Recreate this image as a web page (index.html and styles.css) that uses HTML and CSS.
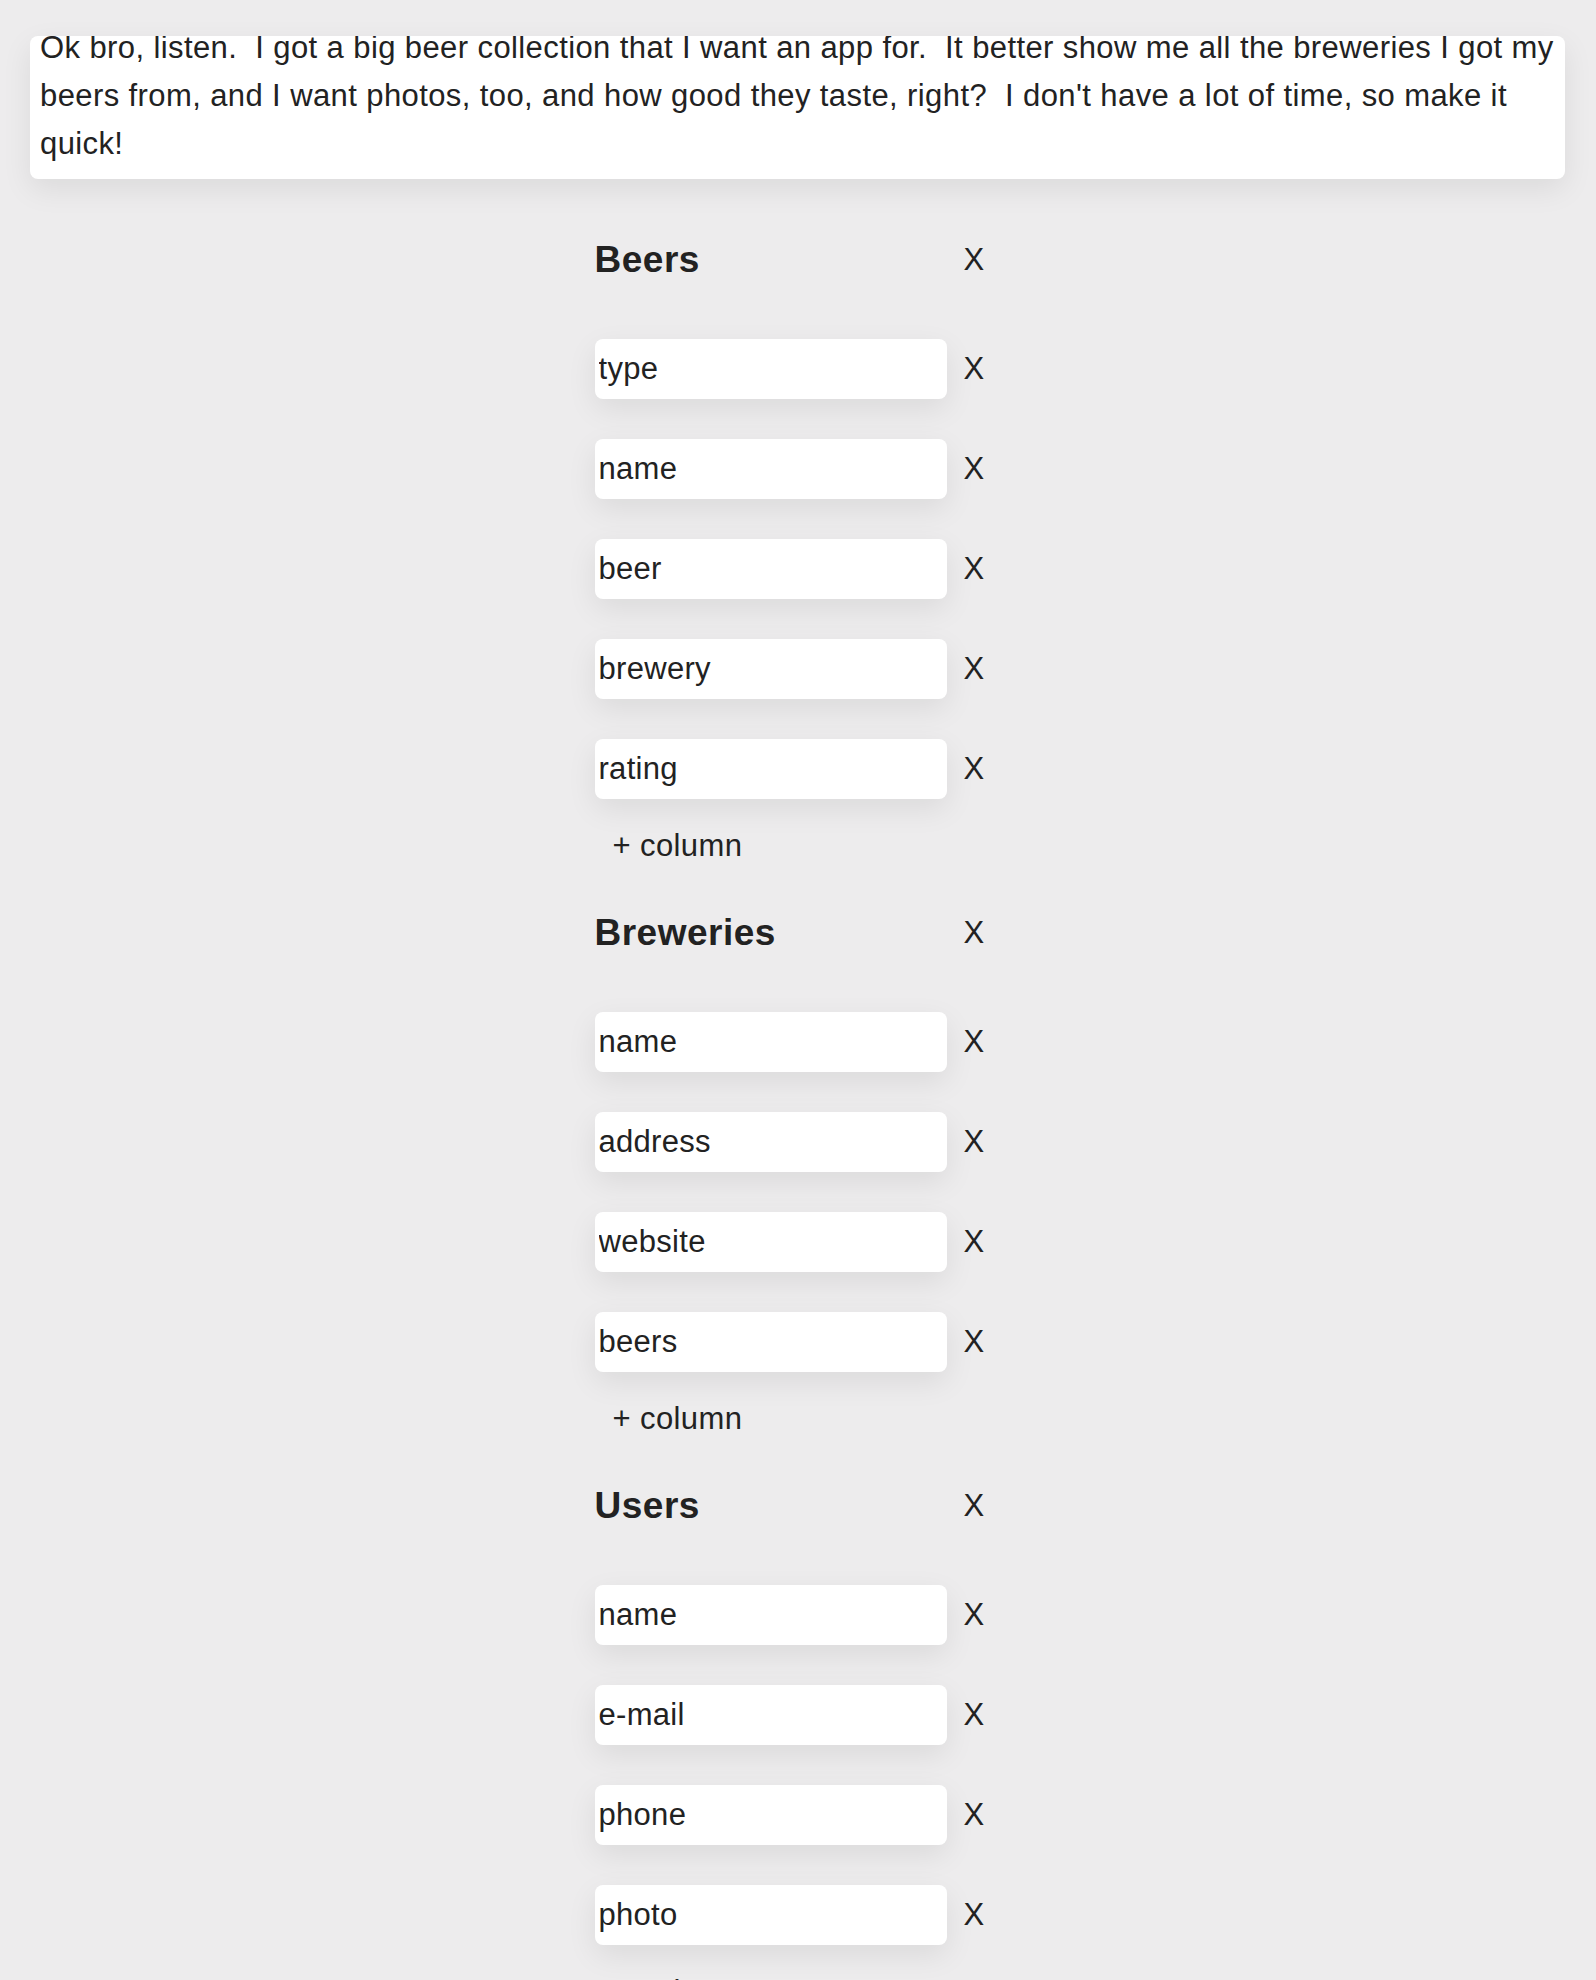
FILE: index.html
```html
<!DOCTYPE html>
<html lang="en">
<head>
    <meta charset="UTF-8">
    <meta name="viewport" content="width=device-width, initial-scale=1.0">
    <title>Beer App Schema</title>
    <link rel="stylesheet" href="styles.css">
</head>
<body>
    <div class="prompt">
        <p class="prompt-text">Ok bro, listen.  I got a big beer collection that I want an app for.  It better show me all the breweries I got my
beers from, and I want photos, too, and how good they taste, right?  I don't have a lot of time, so make it
quick!</p>
    </div>

    <div class="schema">
        <!-- Beers -->
        <div class="table">
            <div class="table-head">
                <h2>Beers</h2>
                <span class="remove">X</span>
            </div>
            <div class="column"><input type="text" value="type"><span class="remove">X</span></div>
            <div class="column"><input type="text" value="name"><span class="remove">X</span></div>
            <div class="column"><input type="text" value="beer"><span class="remove">X</span></div>
            <div class="column"><input type="text" value="brewery"><span class="remove">X</span></div>
            <div class="column"><input type="text" value="rating"><span class="remove">X</span></div>
            <div class="add-column">+ column</div>
        </div>

        <!-- Breweries -->
        <div class="table">
            <div class="table-head">
                <h2>Breweries</h2>
                <span class="remove">X</span>
            </div>
            <div class="column"><input type="text" value="name"><span class="remove">X</span></div>
            <div class="column"><input type="text" value="address"><span class="remove">X</span></div>
            <div class="column"><input type="text" value="website"><span class="remove">X</span></div>
            <div class="column"><input type="text" value="beers"><span class="remove">X</span></div>
            <div class="add-column">+ column</div>
        </div>

        <!-- Users -->
        <div class="table">
            <div class="table-head">
                <h2>Users</h2>
                <span class="remove">X</span>
            </div>
            <div class="column"><input type="text" value="name"><span class="remove">X</span></div>
            <div class="column"><input type="text" value="e-mail"><span class="remove">X</span></div>
            <div class="column"><input type="text" value="phone"><span class="remove">X</span></div>
            <div class="column"><input type="text" value="photo"><span class="remove">X</span></div>
            <div class="add-column">+ column</div>
        </div>
    </div>
</body>
</html>
```

FILE: styles.css
```css
body {
    font-family: 'Liberation Sans', Arial, Helvetica, sans-serif;
    background-color: #edeced;
    color: #222;
    margin: 0;
    padding: 36px 31px 0 30px;
    font-size: 31px;
    letter-spacing: 0.4px;
}
.prompt {
    background-color: white;
    border-radius: 8px;
    box-shadow: 0 10px 30px rgba(0, 0, 0, 0.08);
    padding: 0 0 11px 10px;
    height: 143px;
    box-sizing: border-box;
    overflow: hidden;
}
.prompt-text {
    margin: -12px 0 0 0;
    line-height: 48px;
    white-space: pre;
}
.schema {
    width: 406px;
    margin: 0 auto;
    padding-top: 51px;
}
.table-head,
.column {
    display: flex;
    align-items: center;
    height: 60px;
}
.table-head {
    margin-bottom: 49px;
    letter-spacing: 0.2px;
}
.table-head h2 {
    margin: 0;
    width: 369px;
    font-size: 37px;
    font-weight: bold;
    letter-spacing: 0.5px;
}
.column {
    margin-top: 40px;
    letter-spacing: 0.2px;
}
.table-head + .column {
    margin-top: 0;
}
.column input {
    width: 352px;
    height: 60px;
    box-sizing: border-box;
    border: none;
    border-radius: 8px;
    background-color: white;
    padding: 0 4px;
    font-family: inherit;
    font-size: 31px;
    letter-spacing: 0.3px;
    color: #222;
    box-shadow: 0 10px 30px rgba(0, 0, 0, 0.08);
    margin-right: 17px;
}
.remove {
    cursor: pointer;
}
.add-column {
    margin-top: 23px;
    margin-bottom: 33px;
    padding-left: 18px;
    line-height: 48px;
    cursor: pointer;
}
```
